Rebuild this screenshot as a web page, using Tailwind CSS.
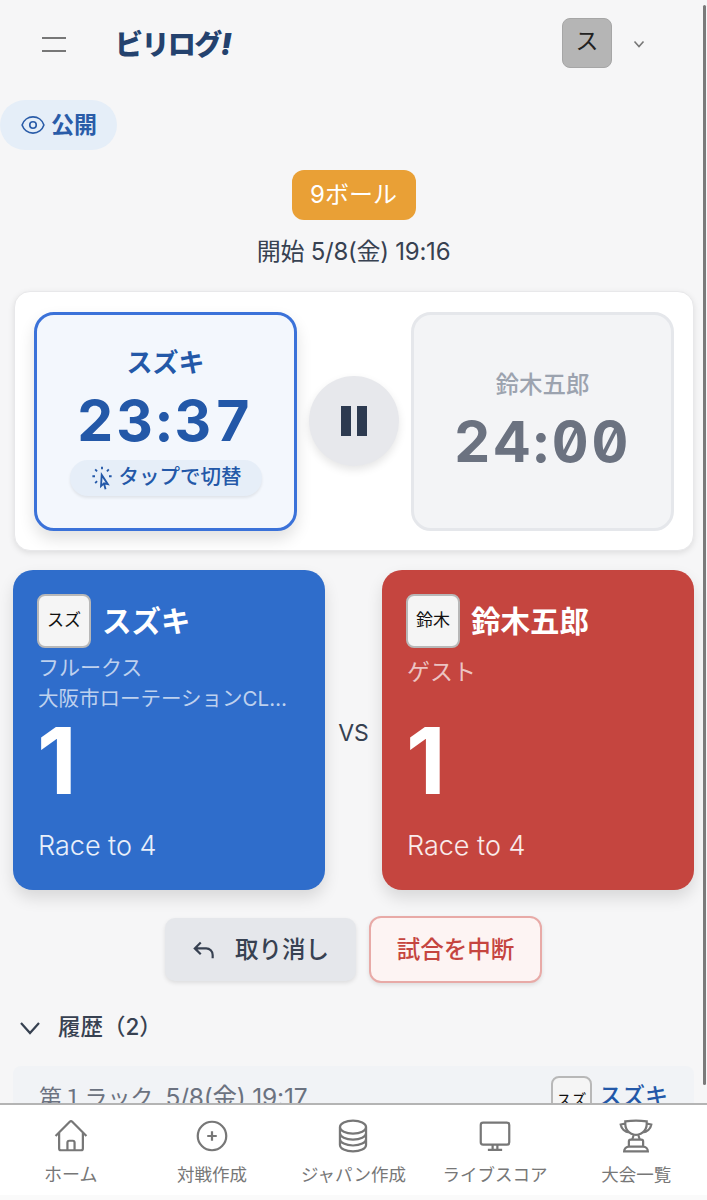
<!DOCTYPE html>
<html lang="ja">
<head>
<meta charset="utf-8">
<script src="https://cdn.jsdelivr.net/npm/@tailwindcss/browser@4"></script>
</head>
<body class="m-0">
<div class="relative w-[707px] h-[1200px] overflow-hidden bg-[#f6f6f7] text-[#374151] font-['Inter','Noto_Sans_CJK_JP',sans-serif]">

  <!-- header -->
  <header class="h-[88px] flex items-center pl-[42px] pr-[61px]">
    <div class="w-[24px] flex flex-col gap-[11px]">
      <div class="h-[2px] bg-[#777]"></div>
      <div class="h-[2px] bg-[#777]"></div>
    </div>
    <div class="ml-[49px] text-[28px] leading-none font-black tracking-[-1.6px] text-[#24426e] whitespace-nowrap">ビリログ<span class="italic text-[30px]">!</span></div>
    <div class="ml-auto w-[50px] h-[50px] flex items-center justify-center rounded-lg bg-[#b5b5b5] border border-[#a6a6a6] text-[23px] text-[#222] -mt-[2px] pb-[4px]">ス</div>
    <svg class="ml-[20px] w-[14px] h-[14px] text-[#777]" viewBox="0 0 14 14" fill="none" stroke="currentColor" stroke-width="1.6"><path d="M2.5 4.5 7 9.5l4.5-5"/></svg>
  </header>

  <!-- public pill -->
  <div class="mt-[12px] w-[117px] h-[50px] rounded-full bg-[#e5eef8] flex items-center pl-[20px] gap-[5px] text-[23px] font-bold text-[#2a5ca8]">
    <svg class="w-[26px] h-[26px] text-[#2a5ca8]" viewBox="0 0 24 24" fill="none" stroke="currentColor" stroke-width="1.5"><path d="M2.036 12.322a1.012 1.012 0 0 1 0-.639C3.423 7.51 7.36 4.5 12 4.5c4.638 0 8.573 3.007 9.963 7.178.07.207.07.431 0 .639C20.577 16.49 16.64 19.5 12 19.5c-4.638 0-8.573-3.007-9.963-7.178Z"/><path d="M15 12a3 3 0 1 1-6 0 3 3 0 0 1 6 0Z"/></svg>
    <span>公開</span>
  </div>

  <!-- badge + start -->
  <div class="mt-[20px] flex flex-col items-center">
    <div class="w-[124px] h-[50px] rounded-xl bg-[#e9a036] text-white text-[24px] flex items-center justify-center">9ボール</div>
    <div class="mt-[14px] text-[24px] leading-[36px] tracking-[-0.25px] text-[#374151]">開始 5/8(金) 19:16</div>
  </div>

  <!-- timer card -->
  <section class="mt-[21px] mx-[14px] w-[680px] h-[260px] rounded-[16px] bg-white border border-[#e8e8ea] shadow-[0_2px_6px_rgba(0,0,0,0.1)] flex items-center pl-[19px] pr-[19px]">
    <div class="w-[263px] h-[219px] rounded-[20px] border-[3px] border-[#3b72d9] bg-[#f3f7fd] shadow-[0_8px_16px_rgba(0,0,0,0.12)] flex flex-col items-center pt-[30px]">
      <div class="text-[26px] leading-[36px] font-bold text-[#2358a8]">スズキ</div>
      <div class="mt-[5px] text-[57px] leading-[70px] font-bold tracking-[3px] [font-feature-settings:'tnum','zero'] text-[#2358a8]">23:37</div>
      <div class="mt-[4px] w-[192px] h-[36px] rounded-full bg-[#e6eef8] shadow-[0_2px_3px_rgba(0,0,0,0.08)] flex items-center justify-center gap-[3px] text-[#2358a8] text-[20.5px] font-medium">
        <svg class="w-[28px] h-[28px] -ml-[2px]" viewBox="0 0 24 24" fill="none" stroke="currentColor" stroke-width="1.6"><path d="M15.042 21.672 13.684 16.6m0 0-2.51 2.225.569-9.47 5.227 7.917-3.286-.672ZM12 2.25V4.5m5.834.166-1.591 1.591M20.25 10.5H18M7.757 14.743l-1.59 1.59M6 10.5H3.75m4.007-4.243-1.59-1.59"/></svg>
        <span>タップで切替</span>
      </div>
    </div>
    <div class="mx-[12px] w-[90px] h-[90px] shrink-0 rounded-full bg-[#e7e8ec] shadow-[0_4px_8px_rgba(0,0,0,0.1)] flex items-center justify-center gap-[6px]">
      <div class="w-[10px] h-[30px] bg-[#2d3a50]"></div>
      <div class="w-[10px] h-[30px] bg-[#2d3a50]"></div>
    </div>
    <div class="w-[263px] h-[219px] rounded-[20px] border-[3px] border-[#e5e7eb] bg-[#f3f4f6] flex flex-col items-center pt-[52px]">
      <div class="text-[23.5px] leading-[36px] font-medium text-[#9ca3af]">鈴木五郎</div>
      <div class="mt-[4px] text-[57px] leading-[70px] font-bold tracking-[3px] [font-feature-settings:'tnum','zero'] text-[#6b7280]">24:00</div>
    </div>
  </section>

  <!-- score cards -->
  <section class="mt-[19px] ml-[13px] w-[681px] flex items-center justify-between">
    <div class="w-[312px] h-[320px] rounded-[20px] bg-[#2f6dcb] text-white shadow-[0_8px_16px_rgba(0,0,0,0.12)] pt-[24px] pl-[24px] pr-[24px]">
      <div class="flex items-center gap-[11px]">
        <div class="w-[54px] h-[54px] rounded-lg bg-[#f5f5f5] border-2 border-[#b8b8b8] flex items-center justify-center text-[17px] text-[#111]">スズ</div>
        <div class="text-[29.5px] font-bold leading-[40px]">スズキ</div>
      </div>
      <div class="mt-[3px] pl-[1px] text-[21px] leading-[34px] text-white/70">フルークス</div>
      <div class="pl-[1px] text-[20.5px] leading-[27px] text-white/70 whitespace-nowrap">大阪市ローテーションCL…</div>
      <div class="-mt-[1px] text-[92px] leading-[100px] font-bold">1</div>
      <div class="mt-[17px] pl-[1px] text-[27px] leading-[36px] font-light text-white/90">Race to 4</div>
    </div>
    <div class="text-[23px] text-[#374151] mt-[6px]">VS</div>
    <div class="w-[312px] h-[320px] rounded-[20px] bg-[#c5453f] text-white shadow-[0_8px_16px_rgba(0,0,0,0.12)] pt-[24px] pl-[24px] pr-[24px]">
      <div class="flex items-center gap-[11px]">
        <div class="w-[54px] h-[54px] rounded-lg bg-[#f5f5f5] border-2 border-[#b8b8b8] flex items-center justify-center text-[17px] text-[#111]">鈴木</div>
        <div class="text-[29.5px] font-bold leading-[40px]">鈴木五郎</div>
      </div>
      <div class="mt-[6px] pl-[1px] text-[23px] leading-[36px] text-white/70">ゲスト</div>
      <div class="mt-[21px] text-[92px] leading-[100px] font-bold">1</div>
      <div class="mt-[17px] pl-[1px] text-[27px] leading-[36px] font-light text-white/90">Race to 4</div>
    </div>
  </section>

  <!-- actions -->
  <div class="mt-[26px] flex justify-center items-center gap-[13px]">
    <div class="w-[191px] h-[63px] rounded-[10px] bg-[#e5e7eb] shadow-[0_2px_4px_rgba(0,0,0,0.1)] flex items-center pl-[26px] gap-[18px] text-[23.5px] font-medium text-[#374151]">
      <svg class="w-[26px] h-[26px]" viewBox="0 0 24 24" fill="none" stroke="currentColor" stroke-width="2"><path d="M9 5 3.5 10.5 9 16M3.5 10.5H14a6 6 0 0 1 6 6v3"/></svg>
      <span>取り消し</span>
    </div>
    <div class="w-[173px] h-[67px] rounded-[12px] bg-[#fdf4f3] border-2 border-[#e8aaa7] shadow-[0_2px_4px_rgba(0,0,0,0.1)] flex items-center justify-center text-[23.5px] font-medium text-[#c5453f]">試合を中断</div>
  </div>

  <!-- history -->
  <div class="mt-[26px] ml-[19px] flex items-center gap-[17px] text-[22.5px] font-medium text-[#374151] h-[36px]">
    <svg class="w-[22px] h-[22px]" viewBox="0 0 22 22" fill="none" stroke="currentColor" stroke-width="2.2"><path d="M2 7l9 10 9-10"/></svg>
    <span>履歴（2）</span>
  </div>
  <div class="mt-[21px] mx-[13px] h-[60px] rounded-t-lg bg-[#f1f3f6] flex items-start pl-[26px] pr-[26px] pt-[10px]">
    <div class="mt-[3px] text-[23px] leading-[36px] tracking-[-0.2px] text-[#6b7280] whitespace-pre">第１ラック  <span class="text-[24.5px]">5/8(金) 19:17</span></div>
    <div class="ml-auto w-[41px] h-[41px] rounded-lg bg-[#f5f5f5] border-2 border-[#b8b8b8] flex items-center justify-center text-[15px] text-[#111] pt-[8px]">スズ</div>
    <div class="ml-[7px] text-[23px] leading-[36px] mt-[2px] font-medium text-[#2358a8]">スズキ</div>
  </div>

  <!-- scrollbar -->
  <div class="absolute right-[1px] top-[5px] w-[3px] h-[1080px] rounded-full bg-[#7a7a7a]"></div>

  <!-- bottom nav -->
  <nav class="absolute left-0 right-0 bottom-0 h-[97px] bg-white border-t-2 border-b-[5px] border-t-[#b4b4b4] border-b-[#fafafa] grid grid-cols-5 text-[#777]">
    <div class="flex flex-col items-center pt-[12px]">
      <svg class="w-[38px] h-[38px]" viewBox="0 0 24 24" fill="none" stroke="currentColor" stroke-width="1.4"><path d="m2.25 12 8.954-8.955c.44-.439 1.152-.439 1.591 0L21.75 12M4.5 9.75v10.125c0 .621.504 1.125 1.125 1.125H9.75v-4.875c0-.621.504-1.125 1.125-1.125h2.25c.621 0 1.125.504 1.125 1.125V21h4.125c.621 0 1.125-.504 1.125-1.125V9.75M8.25 21h8.25"/></svg>
      <span class="mt-[7px] text-[18px] leading-[26px] whitespace-nowrap">ホーム</span>
    </div>
    <div class="flex flex-col items-center pt-[12px]">
      <svg class="w-[38px] h-[38px]" viewBox="0 0 24 24" fill="none" stroke="currentColor" stroke-width="1.4"><path d="M12 9v6m3-3H9m12 0a9 9 0 1 1-18 0 9 9 0 0 1 18 0Z"/></svg>
      <span class="mt-[7px] text-[17.5px] leading-[26px] whitespace-nowrap">対戦作成</span>
    </div>
    <div class="flex flex-col items-center pt-[12px]">
      <svg class="w-[38px] h-[38px]" viewBox="0 0 24 24" fill="none" stroke="currentColor" stroke-width="1.4"><path d="M20.25 6.375c0 2.278-3.694 4.125-8.25 4.125S3.75 8.653 3.75 6.375m16.5 0c0-2.278-3.694-4.125-8.25-4.125S3.75 4.097 3.75 6.375m16.5 0v11.25c0 2.278-3.694 4.125-8.25 4.125s-8.25-1.847-8.25-4.125V6.375m16.5 0v3.75m-16.5-3.75v3.75m16.5 0v3.75C20.25 16.153 16.556 18 12 18s-8.25-1.847-8.25-4.125v-3.75m16.5 0c0 2.278-3.694 4.125-8.25 4.125s-8.25-1.847-8.25-4.125"/></svg>
      <span class="mt-[7px] text-[17.5px] leading-[26px] whitespace-nowrap">ジャパン作成</span>
    </div>
    <div class="flex flex-col items-center pt-[12px]">
      <svg class="w-[38px] h-[38px]" viewBox="0 0 24 24" fill="none" stroke="currentColor" stroke-width="1.4"><rect x="3" y="3.5" width="18" height="14" rx="1.5"/><path d="M10.5 17.5v3M13.5 17.5v3M7.5 20.75h9"/></svg>
      <span class="mt-[7px] text-[17.5px] leading-[26px] whitespace-nowrap">ライブスコア</span>
    </div>
    <div class="flex flex-col items-center pt-[12px]">
      <svg class="w-[38px] h-[38px]" viewBox="0 0 24 24" fill="none" stroke="currentColor" stroke-width="1.4"><path d="M16.5 18.75h-9m9 0a3 3 0 0 1 3 3h-15a3 3 0 0 1 3-3m9 0v-3.375c0-.621-.503-1.125-1.125-1.125h-.871M7.5 18.75v-3.375c0-.621.504-1.125 1.125-1.125h.872m5.007 0H9.497m5.007 0a7.454 7.454 0 0 1-.982-3.172M9.497 14.25a7.454 7.454 0 0 0 .981-3.172M5.25 4.236c-.982.143-1.954.317-2.916.52A6.003 6.003 0 0 0 7.73 9.728M5.25 4.236V4.5c0 2.108.966 3.99 2.48 5.228M5.25 4.236V2.721C7.456 2.41 9.71 2.25 12 2.25c2.291 0 4.545.16 6.75.47v1.516M7.73 9.728a6.726 6.726 0 0 0 2.748 1.35m8.272-6.842V4.5c0 2.108-.966 3.99-2.48 5.228m2.48-5.492a46.32 46.32 0 0 1 2.916.52 6.003 6.003 0 0 1-5.395 4.972m0 0a6.726 6.726 0 0 1-2.749 1.35m0 0a6.772 6.772 0 0 1-3.044 0"/></svg>
      <span class="mt-[7px] text-[17.5px] leading-[26px] whitespace-nowrap">大会一覧</span>
    </div>
  </nav>
</div>
</body>
</html>
